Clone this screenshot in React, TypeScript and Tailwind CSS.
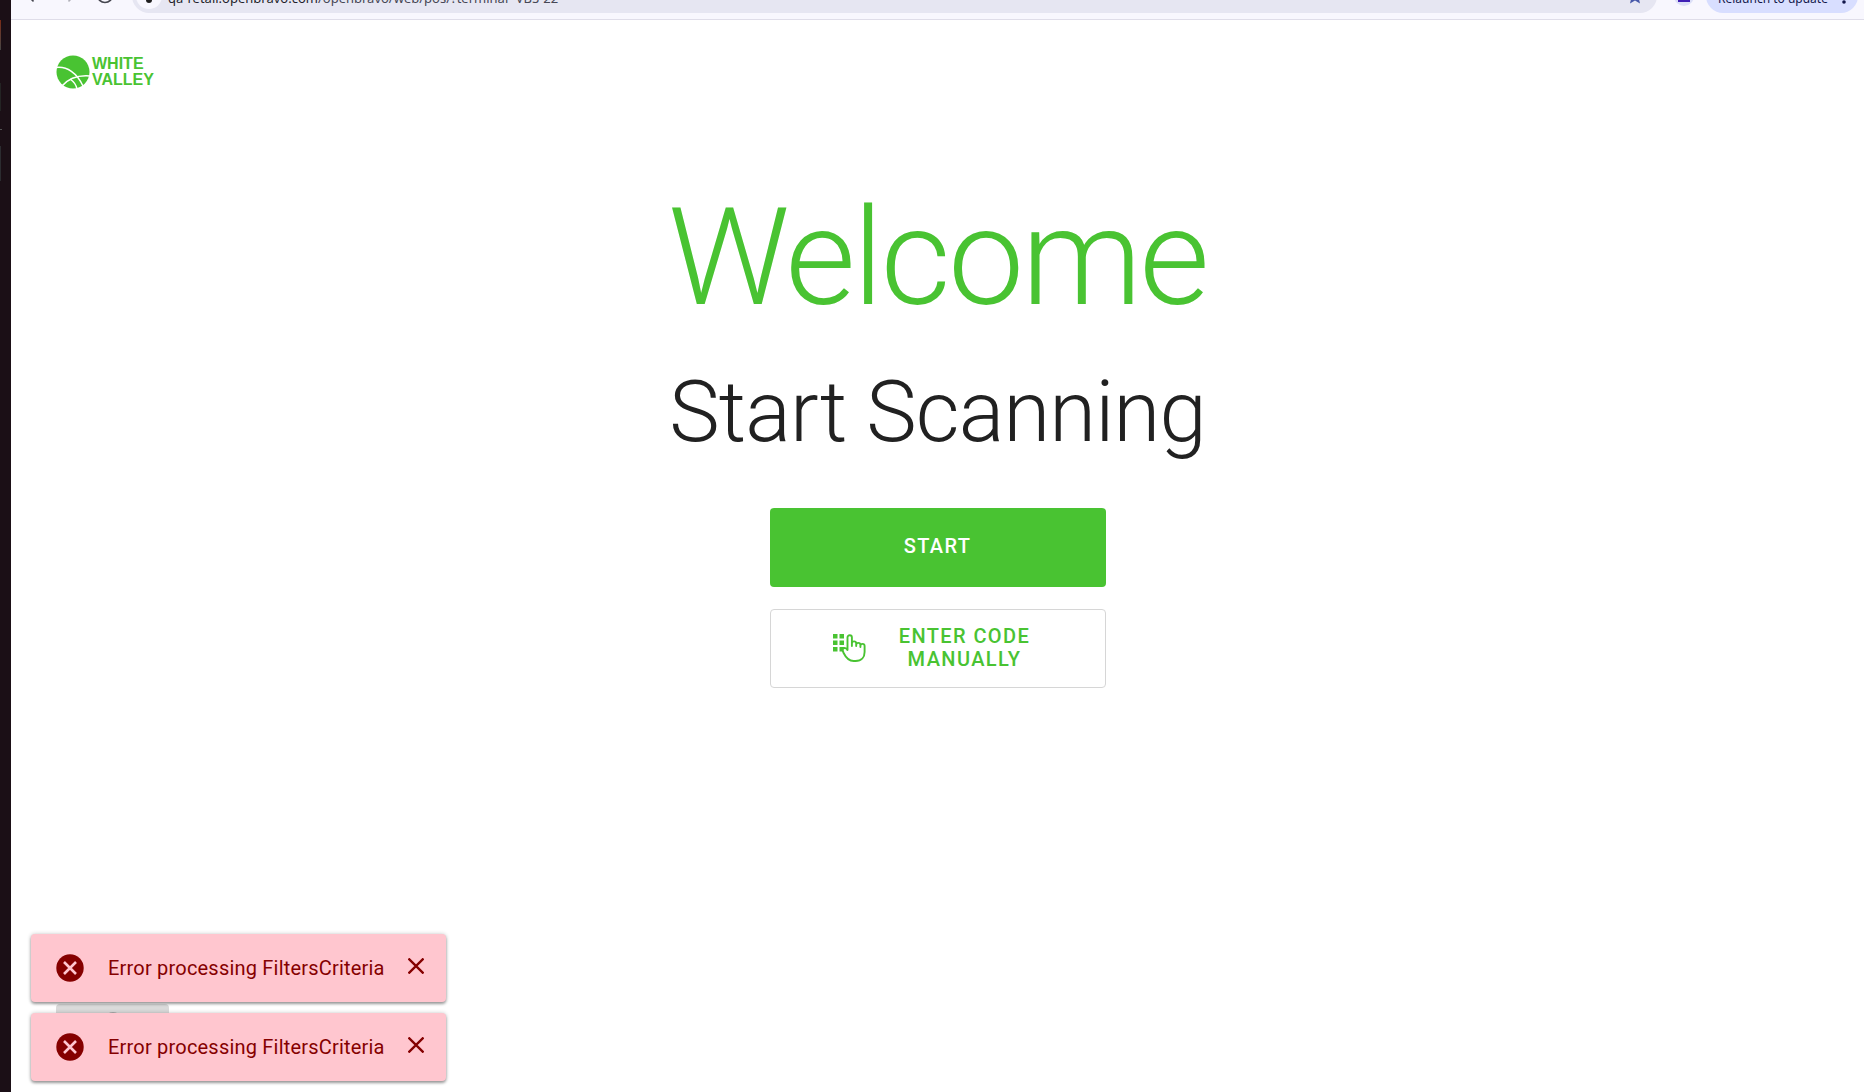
import { ArrowLeft, ArrowRight, RotateCw } from "lucide-react";

const toasts = [
  { id: 1, message: "Error processing FiltersCriteria" },
  { id: 2, message: "Error processing FiltersCriteria" },
];

const Logo = () => {
  return (
    <a href="#" aria-label="White Valley" className="flex items-center gap-0.5 text-[#49c332]">
      <svg viewBox="0 0 34 34" className="size-[34px]">
        <circle cx="17" cy="17" r="16.5" fill="currentColor" />
        <g fill="none" stroke="#fff" strokeWidth="1.5">
          <path d="M0 12.5C11 11 21 18 27 31" />
          <path d="M6 31C13 23 22 20 34 21" />
          <path d="M14 24C17 26 20 29 21 34" />
        </g>
      </svg>
      <span className="font-['Liberation_Sans',sans-serif] text-[16px] leading-4 font-bold">
        <span className="block">WHITE</span>
        <span className="block">VALLEY</span>
      </span>
    </a>
  );
};

const KeypadIcon = () => {
  return (
    <svg viewBox="0 0 33 28" className="h-7 w-[33px]" fill="currentColor">
      {[0, 6.5, 13].map((y) => (
        <g key={y}>
          <rect x="0" y={y} width="4.5" height="4.5" />
          <rect x="6.5" y={y} width="4.5" height="4.5" />
        </g>
      ))}
      <path
        d="M14.5 16V3.5a2.2 2.2 0 0 1 4.4 0V12V9.5a2 2 0 0 1 4.3 0V12v-1a2 2 0 0 1 4.2 0v2v-1a2 2 0 0 1 4.2 0V18c0 5-3 9-9 9h-2c-5 0-8-4-10-8-1.5-3-1-5 1-5q2 0 2.9 2z"
        fill="#fff"
        stroke="currentColor"
        strokeWidth="1.9"
        strokeLinejoin="round"
      />
    </svg>
  );
};

const BrowserBar = () => {
  return (
    <header className="flex h-5 items-end overflow-hidden border-b border-[#dfdde9] bg-[#f8f7fe]">
      <div className="flex h-9 w-[121px] shrink-0 items-start gap-4 pt-0.5 pl-3 text-[#45464f]">
        <ArrowLeft className="size-5" />
        <ArrowRight className="size-5 text-[#b0b0b8]" />
        <RotateCw className="size-5" />
      </div>
      <div className="mb-1.5 flex h-[34px] flex-1 items-center rounded-full bg-[#e6e6f2] pr-3.5 pl-1">
        <span className="flex size-[26px] items-center justify-center rounded-full bg-[#f8f7fe]">
          <span className="size-1.5 translate-y-1 rounded-full bg-[#1f1f1f]" />
        </span>
        <p className="flex-1 pt-1.5 pl-1.5 font-['Noto_Sans',sans-serif] text-[13px] whitespace-nowrap text-[#474755]">
          <span className="text-[#1f1f2b]">qa-retail.openbravo.com</span>
          /openbravo/web/pos/?terminal=VBS-22
        </p>
        <svg viewBox="0 0 16 16" className="size-4 text-[#4758a9]">
          <path
            d="M8 0l2.2 5.2 5.8.5-4.4 3.9L13 15.5l-5-3.1-5 3.1 1.4-5.900L0 5.700l5.800-.5z"
            fill="currentColor"
          />
        </svg>
      </div>
      <span className="mb-[13px] ml-[17px] flex size-5 items-end justify-center rounded-full bg-[#dcdff8] pb-1">
        <span className="size-3 bg-[#3f1fb5]" />
      </span>
      <button className="mr-1.5 mb-1.5 ml-3 flex h-[34px] w-[152px] items-center justify-between rounded-full bg-[#d8deff] px-3 pt-1.5 font-['Noto_Sans',sans-serif] text-[12px] whitespace-nowrap text-[#12174b]">
        Relaunch to update
        <svg viewBox="0 0 4 16" className="mb-1.5 h-4 w-1" fill="currentColor">
          <circle cx="2" cy="2" r="1.8" />
          <circle cx="2" cy="8" r="1.8" />
          <circle cx="2" cy="14" r="1.8" />
        </svg>
      </button>
    </header>
  );
};

const Toast = ({ message }: { message: string }) => {
  return (
    <div
      role="alert"
      className="flex h-[68px] w-[415px] items-center rounded bg-[#ffc6cf] pr-[22px] pl-[25px] text-[#850000] shadow-[0_2px_3px_rgba(0,0,0,0.35),0_0_4px_rgba(0,0,0,0.2)]"
    >
      <svg viewBox="0 0 28 28" className="size-7">
        <circle cx="14" cy="14" r="13.7" fill="currentColor" />
        <path d="M8 8l12 12M20 8L8 20" stroke="#ffc6cf" strokeWidth="2.6" />
      </svg>
      <p className="flex-1 pl-6 text-[20px] leading-7 tracking-[0.01em]">{message}</p>
      <button aria-label="Close" className="mb-1">
        <svg viewBox="0 0 16 16" className="size-4">
          <path d="M.5.5l15 15M15.5.5l-15 15" stroke="currentColor" strokeWidth="2.3" />
        </svg>
      </button>
    </div>
  );
};

const App = () => {
  return (
    <div className="flex min-h-screen bg-white font-['Roboto',sans-serif]">
      <aside className="w-[11px] shrink-0 bg-[#1b0f16]">
        <div className="mt-5 h-[30px] w-px bg-linear-to-b from-[#7a2a14] to-[#444]" />
        <div className="mt-[33px] h-7 w-px bg-[#242424]" />
        <div className="mt-[18px] h-px w-0.5 bg-[#555]" />
        <div className="mt-4 h-[35px] w-px bg-[#2c2c30]" />
      </aside>
      <div className="relative flex min-w-0 flex-1 flex-col">
        <BrowserBar />
        <main className="flex flex-1 flex-col">
          <div className="flex px-[45px] pt-[35px]">
            <Logo />
          </div>
          <div className="flex flex-col items-center pt-[89px] text-center">
            <h1 className="text-[136px] leading-[160px] font-light tracking-[-0.02em] text-[#49c332]">
              Welcome
            </h1>
            <h2 className="mt-[26px] text-[85px] leading-[96px] font-light tracking-[-0.01em] text-[#212121]">
              Start Scanning
            </h2>
            <div className="mt-12 flex w-[336px] flex-col gap-[22px] text-[20px] leading-[23px] font-medium tracking-[0.07em]">
              <button className="h-[79px] rounded bg-[#49c332] pb-0.5 text-white">START</button>
              <button className="flex h-[79px] items-center rounded border border-[#d6d6d6] pb-0.5 pl-[62px] text-[#49c332]">
                <KeypadIcon />
                <span className="ml-5 w-[158px]">ENTER CODE MANUALLY</span>
              </button>
            </div>
          </div>
        </main>
        <button
          aria-label="Menu"
          className="absolute bottom-6 left-[45px] flex h-16 w-[113px] items-start justify-center rounded bg-[#dadada] pt-2"
        >
          <span className="size-4 rounded-full bg-[#a9a9a9]" />
        </button>
        <div className="absolute bottom-[11px] left-5 flex flex-col gap-[11px]">
          {toasts.map((toast) => (
            <Toast key={toast.id} message={toast.message} />
          ))}
        </div>
      </div>
    </div>
  );
};

export default App;
